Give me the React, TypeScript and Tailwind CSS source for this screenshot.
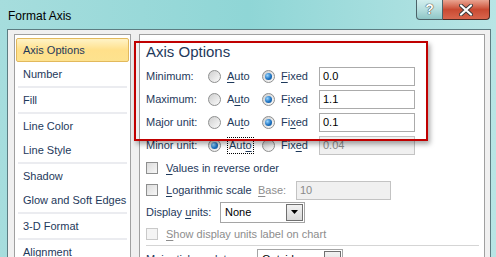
import type { ReactNode } from "react";

const font = { fontFamily: '"Liberation Sans", Arial, sans-serif' };

function Radio({ checked }: { checked?: boolean }) {
  return (
    <span className="flex h-[13px] w-[13px] shrink-0 items-center justify-center rounded-full border border-[#8e8f8f] bg-gradient-to-br from-[#cfcfcf] to-[#fbfbfb]">
      {checked && (
        <span className="h-[7px] w-[7px] rounded-full bg-[radial-gradient(circle_at_35%_35%,#9ad6ff,#1c72c2_55%,#0b4a86)]" />
      )}
    </span>
  );
}

function Check({ disabled }: { disabled?: boolean }) {
  return (
    <span
      className={`h-[12px] w-[12px] shrink-0 border ${
        disabled
          ? "border-[#c9c9c9] bg-[#f4f4f4]"
          : "border-[#8e8f8f] bg-gradient-to-br from-[#dcdcdc] to-[#f7f7f7]"
      }`}
    />
  );
}

function Key({ children }: { children: ReactNode }) {
  return <u className="underline-offset-2">{children}</u>;
}

function AxisRow({
  label,
  auto,
  fixed,
  value,
  autoOn,
}: {
  label: string;
  auto: ReactNode;
  fixed: ReactNode;
  value: string;
  autoOn?: boolean;
}) {
  return (
    <div className="flex h-[19px] items-center">
      <span className="w-[62px]">{label}</span>
      <div className="flex w-[54px] items-center gap-[6px]">
        <Radio checked={autoOn} />
        <span className={autoOn ? "border border-dotted border-black px-[1px] leading-[15px]" : ""}>{auto}</span>
      </div>
      <div className="flex w-[57px] items-center gap-[6px]">
        <Radio checked={!autoOn} />
        <span>{fixed}</span>
      </div>
      <div
        className={`flex h-[19px] w-[96px] items-center border px-[3px] ${
          autoOn ? "border-[#c3c3c3] bg-[#f0f0f0] text-[#8a8a8a]" : "border-[#ababab] bg-white text-black"
        }`}
      >
        {value}
      </div>
    </div>
  );
}

function Select({ value, width }: { value: string; width: string }) {
  return (
    <div className={`flex h-[21px] ${width} items-center justify-between border border-[#a5a5a5] bg-white pl-[4px] text-black`}>
      <span>{value}</span>
      <span className="m-[1px] flex h-[17px] w-[17px] items-center justify-center border border-[#707070] bg-gradient-to-b from-[#f2f2f2] to-[#d9d9d9]">
        <svg width="7" height="4" viewBox="0 0 7 4">
          <path d="M0 0h7L3.5 4z" fill="#000" />
        </svg>
      </span>
    </div>
  );
}

const groups = [
  ["Axis Options", "Number"],
  ["Fill"],
  ["Line Color", "Line Style"],
  ["Shadow", "Glow and Soft Edges"],
  ["3-D Format"],
  ["Alignment"],
];

export default function App() {
  return (
    <div
      className="relative flex h-[257px] w-[496px] flex-col overflow-hidden bg-gradient-to-r from-[#a6dddd] via-[#8fd6d6] to-[#b8e5e5] text-[11px] text-[#1e395b]"
      style={font}
    >
      <div className="flex h-[29px] shrink-0 items-start justify-between">
        <span className="pl-[8px] pt-[7px] text-[12px] text-black">Format Axis</span>
        <div className="mr-[6px] flex">
          <div className="flex h-[20px] w-[27px] items-center justify-center rounded-bl-[4px] border border-t-0 border-[#4c6268] bg-gradient-to-b from-[#d2eeee] via-[#b5dede] to-[#8fc6c6] text-[14px] font-bold text-white [text-shadow:0_0_1px_#222,0_0_1px_#222]">
            ?
          </div>
          <div className="flex h-[20px] w-[47px] items-center justify-center rounded-br-[4px] border border-l-0 border-t-0 border-[#4c2a24] bg-gradient-to-b from-[#e9a491] via-[#c94a32] to-[#d8654c]">
            <svg width="14" height="12" viewBox="0 0 14 12">
              <path d="M2 1.5L12 10.5M12 1.5L2 10.5" stroke="#3a3a3a" strokeWidth="4" strokeLinecap="round" />
              <path d="M2 1.5L12 10.5M12 1.5L2 10.5" stroke="#fff" strokeWidth="2.2" strokeLinecap="round" />
            </svg>
          </div>
        </div>
      </div>

      <div className="ml-[7px] mr-[5px] flex flex-1 gap-[8px] border border-b-0 border-[#5d7d82] bg-[#f0f0f0] pl-[6px] pr-[5px] pt-[4px]">
        <div className="flex w-[117px] flex-col border border-[#a0a0a0] bg-white px-[1px] pt-[3px]">
          {groups.map((g, gi) => (
            <div key={gi} className="flex flex-col">
              {gi > 0 && <div className="mx-[2px] h-[2px] bg-[#ebecf0]" />}
              {g.map((item) =>
                item === "Axis Options" ? (
                  <div
                    key={item}
                    className="flex h-[24px] items-center rounded-[2px] border border-[#e2b95c] bg-gradient-to-b from-[#fff3c6] via-[#ffe08a] to-[#fde28f] pl-[6px]"
                  >
                    {item}
                  </div>
                ) : (
                  <div key={item} className="flex h-[24px] items-center pl-[7px]">
                    {item}
                  </div>
                )
              )}
            </div>
          ))}
        </div>

        <div className="flex w-[346px] flex-col border border-[#a0a0a0] bg-white pl-[6px] pt-[7px]">
          <div className="text-[15px] leading-[20px]">Axis Options</div>
          <div className="mt-[5px] flex flex-col gap-[4px]">
            <AxisRow label="Minimum:" auto={<><Key>A</Key>uto</>} fixed={<><Key>F</Key>ixed</>} value="0.0" />
            <AxisRow label="Maximum:" auto={<>A<Key>u</Key>to</>} fixed={<>F<Key>i</Key>xed</>} value="1.1" />
            <AxisRow label="Major unit:" auto={<>Au<Key>t</Key>o</>} fixed={<>Fi<Key>x</Key>ed</>} value="0.1" />
            <AxisRow label="Minor unit:" auto={<>Aut<Key>o</Key></>} fixed={<>Fix<Key>e</Key>d</>} value="0.04" autoOn />
          </div>
          <div className="mt-[2px] flex h-[22px] items-center gap-[8px]">
            <Check />
            <span><Key>V</Key>alues in reverse order</span>
          </div>
          <div className="flex h-[22px] items-center">
            <div className="flex w-[112px] items-center gap-[8px]">
              <Check />
              <span><Key>L</Key>ogarithmic scale</span>
            </div>
            <span className="w-[38px] text-[#8d8d8d]"><Key>B</Key>ase:</span>
            <div className="flex h-[19px] w-[95px] items-center border border-[#c3c3c3] bg-[#f0f0f0] px-[3px] text-[#8a8a8a]">10</div>
          </div>
          <div className="flex h-[22px] items-center">
            <span className="w-[74px]">Display <Key>u</Key>nits:</span>
            <Select value="None" width="w-[85px]" />
          </div>
          <div className="flex h-[22px] items-center gap-[8px] text-[#8d8d8d]">
            <Check disabled />
            <span><Key>S</Key>how display units label on chart</span>
          </div>
          <div className="mr-[5px] h-px bg-[#d5d5d5]" />
          <div className="mt-[2px] flex h-[22px] items-center">
            <span className="w-[111px]">Major tic<Key>k</Key> mark type:</span>
            <Select value="Outside" width="w-[86px]" />
          </div>
        </div>
      </div>

      <div className="pointer-events-none absolute left-[134px] top-[41px] h-[100px] w-[294px] border-2 border-[#c00000] shadow-[2px_3px_5px_rgba(0,0,0,0.35)]" />
    </div>
  );
}
